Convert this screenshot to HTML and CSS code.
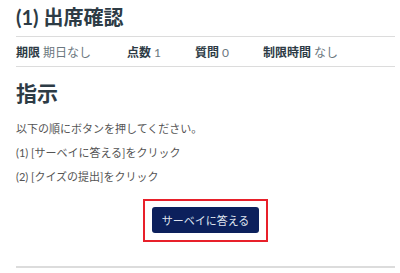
FILE: index.html
```html
<!DOCTYPE html>
<html lang="ja">

<head>
    <meta charset="utf-8">
    <title>出席確認</title>

    <link rel="stylesheet" href="styles.css">
</head>

<body>
    <div class="quiz">
        <h1 class="quiz__title">(1) 出席確認</h1>

        <ul class="quiz__meta">
            <li><span class="meta__label">期限</span> 期日なし</li>
            <li><span class="meta__label">点数</span> 1</li>
            <li><span class="meta__label">質問</span> 0</li>
            <li><span class="meta__label">制限時間</span> なし</li>
        </ul>

        <h2 class="quiz__heading">指示</h2>
        <p class="quiz__text">以下の順にボタンを押してください。</p>
        <p class="quiz__text">(1) [サーベイに答える]をクリック</p>
        <p class="quiz__text">(2) [クイズの提出]をクリック</p>

        <div class="quiz__actions">
            <div class="highlight">
                <button class="btn">サーベイに答える</button>
            </div>
        </div>
    </div>
</body>

</html>
```

FILE: styles.css
```css
* {
    padding: 0;
    margin: 0;
    box-sizing: border-box;
}

body {
    background: white;
    font-family: Lato, "Noto Sans CJK JP", sans-serif;
    color: #2d3b45;
}

.quiz {
    padding: 0 5px 0 16px;
}

.quiz__title {
    font-size: 20px;
    line-height: 24px;
    font-weight: bold;
    padding-top: 5px;
    padding-bottom: 7px;
}

.quiz__meta {
    list-style: none;
    display: flex;
    height: 31px;
    align-items: center;
    border-top: 1px solid #dcdcdc;
    border-bottom: 1px solid #dcdcdc;
    font-size: 12px;
    color: #6b7780;
}

.quiz__meta li:nth-child(1) {
    width: 111px;
}

.quiz__meta li:nth-child(2) {
    width: 68px;
}

.quiz__meta li:nth-child(3) {
    width: 68px;
}

.meta__label {
    font-weight: bold;
    color: #2d3b45;
}

.quiz__heading {
    font-size: 21px;
    line-height: 28px;
    font-weight: bold;
    margin-top: 12px;
    margin-bottom: 14px;
}

.quiz__text {
    font-size: 11px;
    line-height: 16px;
    color: #555;
    margin-bottom: 8px;
}

.quiz__actions {
    display: flex;
    justify-content: center;
    padding-top: 6px;
    padding-bottom: 24px;
    border-bottom: 2px solid #dcdcdc;
}

.highlight {
    border: 2px solid #e8202a;
    padding: 6px 7px 7px;
}

.btn {
    display: block;
    width: 107px;
    height: 26px;
    border: none;
    border-radius: 3px;
    background: #0c205c;
    color: #dfe3ee;
    font-family: Lato, "Noto Sans CJK JP", sans-serif;
    font-size: 11px;
}
```
